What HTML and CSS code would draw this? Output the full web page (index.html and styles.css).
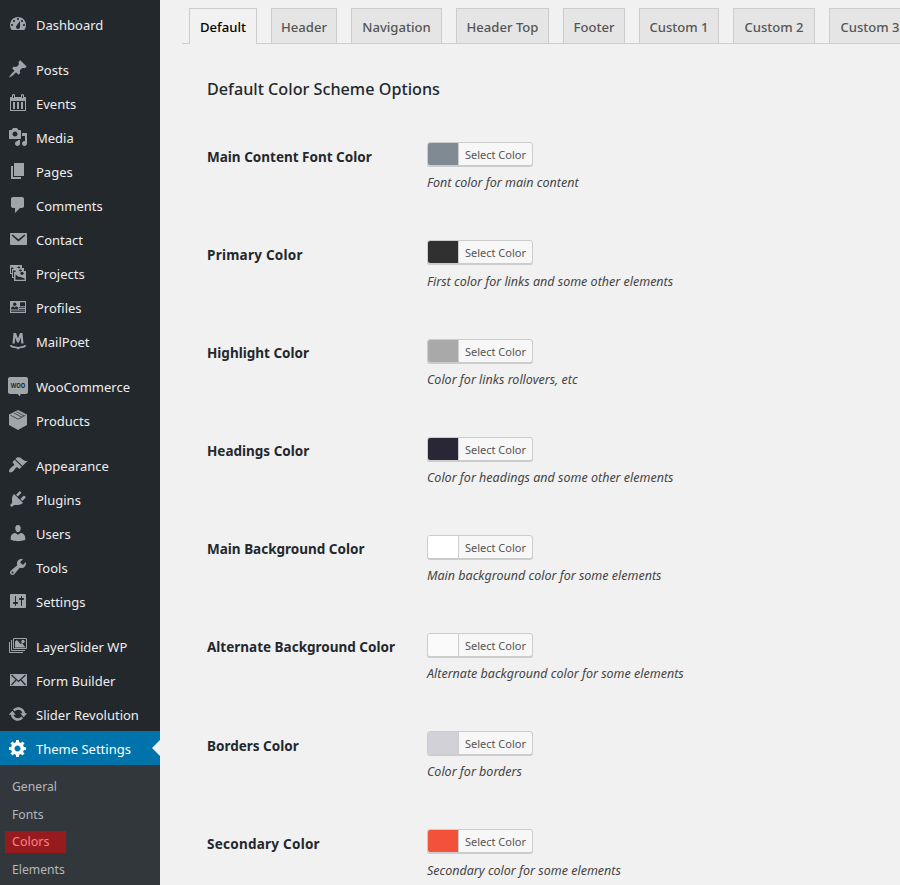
FILE: index.html
```html
<!DOCTYPE html>
<html lang="en">
<head>
<meta charset="utf-8">
<title>Theme Settings</title>
<link rel="stylesheet" href="styles.css">
</head>
<body>
<nav class="sidebar">
  <ul class="menu">
    <li class="item"><svg class="icon" viewBox="0 0 20 20"><path d="M3.76 16h12.48c1.1-1.37 1.76-3.11 1.76-5 0-4.42-3.58-8-8-8s-8 3.58-8 8c0 1.89.66 3.63 1.76 5zM10 4c.55 0 1 .45 1 1s-.45 1-1 1-1-.45-1-1 .45-1 1-1zM6 6c.55 0 1 .45 1 1s-.45 1-1 1-1-.45-1-1 .45-1 1-1zm8 0c.55 0 1 .45 1 1s-.45 1-1 1-1-.45-1-1 .45-1 1-1zm-5.37 5.55L12 7v6c0 1.1-.9 2-2 2s-2-.9-2-2c0-.57.24-1.08.63-1.45zM4 10c.55 0 1 .45 1 1s-.45 1-1 1-1-.45-1-1 .45-1 1-1zm12 0c.55 0 1 .45 1 1s-.45 1-1 1-1-.45-1-1 .45-1 1-1z"/></svg><span>Dashboard</span></li>
    <li class="item gap"><svg class="icon" viewBox="0 0 20 20"><path d="M10.44 3.02l1.82-1.82 6.36 6.35-1.83 1.82c-1.05-.68-2.48-.57-3.41.36l-.75.75c-.92.93-1.04 2.35-.35 3.41l-1.83 1.82-2.41-2.41-2.8 2.79c-.42.42-3.38 2.71-3.8 2.29s1.86-3.39 2.28-3.81l2.79-2.79L4.1 9.36l1.83-1.82c1.05.69 2.48.57 3.4-.36l.75-.75c.93-.92 1.05-2.35.36-3.41z"/></svg><span>Posts</span></li>
    <li class="item"><svg class="icon" viewBox="0 0 20 20"><path d="M2 4h2V2.500c0-2 3-2 3 0V4h6V2.500c0-2 3-2 3 0V4h2v14H2zM3 8v9h14V8zM5 9h2v7H5zM9 9h2v7H9zM13 9h2v7h-2zM5 2.500V5h1V2.500zM14 2.500V5h1V2.500z" fill-rule="evenodd"/></svg><span>Events</span></li>
    <li class="item"><svg class="icon" viewBox="0 0 20 20"><path d="M13 11V4c0-.55-.45-1-1-1h-1.67L9 1H5L3.67 3H2c-.55 0-1 .45-1 1v7c0 .55.45 1 1 1h10c.55 0 1-.45 1-1zM7 4.5c1.38 0 2.5 1.12 2.5 2.5S8.38 9.5 7 9.5 4.5 8.38 4.5 7 5.62 4.5 7 4.5zM14 6h5v10.5c0 1.38-1.12 2.5-2.5 2.5S14 17.88 14 16.5s1.12-2.5 2.5-2.5c.17 0 .34.02.5.05V9h-3V6zm-4 8.05V13h2v3.5c0 1.38-1.12 2.5-2.5 2.5S7 17.88 7 16.5 8.12 14 9.5 14c.17 0 .34.02.5.05z"/></svg><span>Media</span></li>
    <li class="item"><svg class="icon" viewBox="0 0 20 20"><path d="M6 15V2h10v13H6zm-1 1h8v2H3V5h2v11z"/></svg><span>Pages</span></li>
    <li class="item"><svg class="icon" viewBox="0 0 20 20"><path d="M5 2h9c1.1 0 2 .9 2 2v7c0 1.1-.9 2-2 2h-2l-5 5v-5H5c-1.1 0-2-.9-2-2V4c0-1.1.9-2 2-2z"/></svg><span>Comments</span></li>
    <li class="item"><svg class="icon" viewBox="0 0 20 20"><path d="M3 4h15c.6 0 1 .4 1 1v10c0 .6-.4 1-1 1H3c-.6 0-1-.4-1-1V5c0-.6.4-1 1-1zM3.6 6.6l6.9 5.9 6.9-5.9-1-1-5.9 4.6-5.9-4.6z" fill-rule="evenodd"/></svg><span>Contact</span></li>
    <li class="item"><svg class="icon" viewBox="0 0 20 20"><path d="M2 2h12v3h2v3h2v10H6v-3H4v-4H2zM3 4.500v5.500h1V6h1.200V4.500zM5 7.500V14h1V9h1.500V7.500z" fill-rule="evenodd"/><path class="hole" d="M7.500 16.700V11.500l3 2.200 2 .3 4.200 1.500v1.200zM9 4.500l2-1.200 1.500 1.500-1.500.8zM10.500 7.800l2-1.500 1.500 1-1.200 1.300z"/><circle class="hole" cx="14" cy="10.300" r="1.600"/></svg><span>Projects</span></li>
    <li class="item"><svg class="icon" viewBox="0 0 20 20"><path d="M2 4h16v12H2zM3 13.500v1.200h14v-1.200zM12 5.200v4h5v-4zM11 10.200v.9h6v-.9zM11 12v.8h6V12z" fill-rule="evenodd"/><path class="hole" d="M3.200 12.500v-2l2-1.300L6.700 10.500l1.500-1.300 2 1.300v2z"/><circle class="hole" cx="6.700" cy="7.300" r="1.700"/></svg><span>Profiles</span></li>
    <li class="item"><svg class="icon" viewBox="0 0 20 20"><path d="M4.500 12.500L5.500 2H8l2 5.500L12 2h2.500l1 10.500h-2.200L12.800 6.500 10.900 11.500H9.100L7.200 6.500l-.5 6z"/><path class="line" d="M2.600 14.300c1 3 5.400.6 7.400 3 2-2.400 6.400 0 7.400-3"/></svg><span>MailPoet</span></li>
    <li class="item gap"><svg class="icon" viewBox="0 0 20 20"><path d="M2 1h16c1.100 0 2 .9 2 2v13c0 1.100-.9 2-2 2h-5.500l-.5 2.500L9.500 18H2c-1.100 0-2-.9-2-2V3c0-1.100.9-2 2-2z"/><text class="woo" x="2.800" y="12" textLength="14.500" lengthAdjust="spacingAndGlyphs">WOO</text></svg><span>WooCommerce</span></li>
    <li class="item"><svg class="icon" viewBox="0 0 20 20"><path d="M10 0l9 4.500v10.500L10 20l-9-5V4.500z"/><path class="seam" d="M2.500 5.200L10 9.200l7.500-4M6 3l8 4.300M8.500 1.800l7.500 4"/></svg><span>Products</span></li>
    <li class="item gap"><svg class="icon" viewBox="0 0 20 20"><path d="M14.480 11.060L7.410 3.990l1.500-1.500c.5-.56 2.300-.47 3.510.32 1.210.8 1.430 1.280 2.910 2.100 1.180.64 2.450 1.260 4.450.85zm-.71.71L6.700 4.700 4.930 6.470c-.39.39-.39 1.020 0 1.410l1.060 1.060c.39.39.39 1.030 0 1.420-.6.6-1.430 1.110-2.210 1.690-.35.26-.7.53-1.010.84C1.430 14.230.4 16.080 1.400 17.070c.99 1 2.840-.03 4.180-1.360.31-.31.58-.66.85-1.020.57-.78 1.080-1.610 1.690-2.210.39-.39 1.020-.39 1.410 0l1.060 1.060c.39.39 1.020.39 1.410 0z"/></svg><span>Appearance</span></li>
    <li class="item"><svg class="icon" viewBox="0 0 20 20"><path d="M13.110 4.360L9.870 7.600 8 5.730l3.240-3.240c.35-.34 1.050-.2 1.560.32.52.51.66 1.210.31 1.550zm-8 1.770l.91-1.120 9.010 9.010-1.190.84c-.71.71-2.630 1.160-3.820 1.160H6.140L4.900 17.260c-.59.59-1.540.59-2.120 0-.59-.58-.59-1.530 0-2.120l1.240-1.240v-3.880c0-1.130.4-3.190 1.090-3.890zm7.260 3.970l3.240-3.240c.34-.35 1.040-.21 1.550.31.52.51.66 1.210.31 1.550l-3.240 3.250z"/></svg><span>Plugins</span></li>
    <li class="item"><svg class="icon" viewBox="0 0 20 20"><path d="M10 9.250c-2.270 0-2.730-3.440-2.730-3.440C7 4.020 7.820 2 9.970 2c2.160 0 2.980 2.020 2.710 3.810 0 0-.41 3.440-2.680 3.440zm0 2.570L12.720 10c2.390 0 4.520 2.330 4.520 4.530v2.490s-3.650 1.130-7.240 1.130c-3.650 0-7.240-1.130-7.240-1.130v-2.490c0-2.250 1.940-4.480 4.470-4.480z"/></svg><span>Users</span></li>
    <li class="item"><svg class="icon" viewBox="0 0 20 20"><path d="M16.680 9.770c-1.340 1.340-3.300 1.670-4.950.99l-5.410 6.520c-.99.99-2.590.99-3.580 0s-.99-2.590 0-3.570l6.520-5.420c-.68-1.650-.35-3.610.99-4.950 1.280-1.280 3.120-1.620 4.720-1.060l-2.890 2.890 2.820 2.820 2.860-2.870c.53 1.580.18 3.390-1.080 4.650zM3.810 16.210c.4.39 1.040.39 1.430 0 .4-.4.4-1.040 0-1.430-.39-.4-1.030-.4-1.430 0-.39.39-.39 1.030 0 1.430z"/></svg><span>Tools</span></li>
    <li class="item"><svg class="icon" viewBox="0 0 20 20"><path d="M18 16V4c0-.55-.45-1-1-1H3c-.55 0-1 .45-1 1v12c0 .55.45 1 1 1h14c.55 0 1-.45 1-1zM8 11h1c.55 0 1 .45 1 1s-.45 1-1 1H8v1.500c0 .28-.22.5-.5.5s-.5-.22-.5-.5V13H6c-.55 0-1-.45-1-1s.45-1 1-1h1V5.500c0-.28.22-.5.5-.5s.5.22.5.5V11zm5-2h-1c-.55 0-1-.45-1-1s.45-1 1-1h1V5.500c0-.28.22-.5.5-.5s.5.22.5.5V7h1c.55 0 1 .45 1 1s-.45 1-1 1h-1v5.500c0 .28-.22.5-.5.5s-.5-.22-.5-.5V9z"/></svg><span>Settings</span></li>
    <li class="item gap"><svg class="icon" viewBox="0 0 20 20"><path class="frame" d="M5.500 2.500h13v10h-13zM3.500 4v10.500H17M1.500 6v10.500H15"/><path d="M7 11.500V5.500l2-1.500 3.500 4 1.500-1 3.500 4.500z"/><circle cx="15" cy="5.500" r="1.700"/></svg><span>LayerSlider WP</span></li>
    <li class="item"><svg class="icon" viewBox="0 0 20 20"><path d="M2 4h17v12H2z"/><path class="cut" d="M3.500 5l7 6.500 7-6.500M3.500 15l4.500-5M17.500 15L13 10"/></svg><span>Form Builder</span></li>
    <li class="item"><svg class="icon" viewBox="0 0 20 20"><path d="M10.200 3.280c3.530 0 6.430 2.610 6.920 6h2.080l-3.500 4-3.500-4h2.320c-.45-1.970-2.210-3.450-4.320-3.450-1.450 0-2.730.71-3.540 1.780L4.950 5.660C6.230 4.200 8.110 3.280 10.200 3.280zm-.4 13.440c-3.520 0-6.430-2.610-6.920-6H.8l3.500-4c1.170 1.330 2.330 2.670 3.500 4H5.480c.45 1.970 2.210 3.450 4.320 3.450 1.450 0 2.730-.71 3.540-1.780l1.710 1.950c-1.280 1.460-3.150 2.380-5.250 2.380z"/></svg><span>Slider Revolution</span></li>
    <li class="item current"><svg class="icon" viewBox="0 0 20 20"><path d="M18 12h-2.180c-.17.7-.44 1.350-.81 1.930l1.540 1.540-2.100 2.100-1.540-1.540c-.58.36-1.230.63-1.910.79V19H8v-2.180c-.68-.16-1.330-.43-1.910-.79l-1.540 1.540-2.120-2.120 1.540-1.540c-.36-.58-.63-1.230-.79-1.910H1V9.030h2.170c.16-.7.44-1.350.8-1.940L2.430 5.550l2.100-2.100 1.540 1.540c.58-.37 1.240-.64 1.930-.81V2h3v2.180c.68.16 1.330.43 1.910.79l1.540-1.540 2.120 2.120-1.540 1.540c.36.59.64 1.240.8 1.940H18V12zm-8.500 1.500c1.660 0 3-1.340 3-3s-1.340-3-3-3-3 1.340-3 3 1.340 3 3 3z"/></svg><span>Theme Settings</span></li>
  </ul>
  <ul class="submenu">
    <li><span>General</span></li>
    <li><span>Fonts</span></li>
    <li class="selected"><span>Colors</span></li>
    <li><span>Elements</span></li>
  </ul>
</nav>
<main class="content">
  <div class="tabs">
    <a class="tab active">Default</a>
    <a class="tab">Header</a>
    <a class="tab">Navigation</a>
    <a class="tab">Header Top</a>
    <a class="tab">Footer</a>
    <a class="tab">Custom 1</a>
    <a class="tab">Custom 2</a>
    <a class="tab">Custom 3</a>
  </div>
  <h2 class="title">Default Color Scheme Options</h2>
  <div class="options">
    <div class="row"><div class="label">Main Content Font Color</div><div class="field"><div class="picker"><i class="swatch font"></i><span>Select Color</span></div><p class="hint">Font color for main content</p></div></div>
    <div class="row"><div class="label wide">Primary Color</div><div class="field"><div class="picker"><i class="swatch primary"></i><span>Select Color</span></div><p class="hint">First color for links and some other elements</p></div></div>
    <div class="row"><div class="label">Highlight Color</div><div class="field"><div class="picker"><i class="swatch highlight"></i><span>Select Color</span></div><p class="hint">Color for links rollovers, etc</p></div></div>
    <div class="row"><div class="label">Headings Color</div><div class="field"><div class="picker"><i class="swatch headings"></i><span>Select Color</span></div><p class="hint">Color for headings and some other elements</p></div></div>
    <div class="row"><div class="label">Main Background Color</div><div class="field"><div class="picker"><i class="swatch main-bg"></i><span>Select Color</span></div><p class="hint">Main background color for some elements</p></div></div>
    <div class="row"><div class="label">Alternate Background Color</div><div class="field"><div class="picker"><i class="swatch alt-bg"></i><span>Select Color</span></div><p class="hint">Alternate background color for some elements</p></div></div>
    <div class="row"><div class="label">Borders Color</div><div class="field"><div class="picker"><i class="swatch borders"></i><span>Select Color</span></div><p class="hint">Color for borders</p></div></div>
    <div class="row"><div class="label wide">Secondary Color</div><div class="field"><div class="picker"><i class="swatch secondary"></i><span>Select Color</span></div><p class="hint">Secondary color for some elements</p></div></div>
  </div>
</main>
</body>
</html>
```
FILE: styles.css
```css
* { box-sizing: border-box; }
body {
  margin: 0;
  height: 885px;
  display: flex;
  overflow: hidden;
  background: #f1f1f1;
  color: #23282d;
  font-family: "Noto Sans", "Open Sans", sans-serif;
  font-size: 13px;
}
ul { list-style: none; margin: 0; padding: 0; }
.sidebar {
  flex: none;
  width: 160px;
  height: 885px;
  padding-top: 7px;
  background: #23282d;
  display: flex;
  flex-direction: column;
}
.item {
  position: relative;
  display: flex;
  align-items: center;
  gap: 8px;
  height: 34px;
  padding-left: 8px;
  color: #eee;
  white-space: nowrap;
}
.item span { padding-top: 2px; }
.gap { margin-top: 11px; }
.icon { width: 20px; height: 20px; flex: none; fill: #a0a5aa; overflow: visible; }
.icon .hole { fill: #23282d; }
.icon .line { fill: none; stroke: #a0a5aa; stroke-width: 1.8; }
.icon .cut { fill: none; stroke: #23282d; stroke-width: 1.2; }
.icon .seam { fill: none; stroke: #23282d; stroke-width: 0.7; }
.icon .frame { fill: none; stroke: #a0a5aa; stroke-width: 1; }
.icon .woo { font: bold 7px "Noto Sans", sans-serif; fill: #23282d; }
.current { background: #0073aa; color: #fff; }
.current .icon { fill: #fff; }
.current::after {
  content: "";
  position: absolute;
  right: 0;
  top: 9px;
  border: 8px solid transparent;
  border-left-width: 0;
  border-right-color: #f1f1f1;
}
.submenu {
  flex: 1;
  background: #32373c;
  padding: 8px 0 0 5px;
  color: #b4b9be;
  font-size: 12.2px;
}
.submenu li { height: 27.8px; display: flex; align-items: center; }
.submenu span { padding: 0 7px; height: 22px; line-height: 22px; }
.submenu .selected span { width: 61px; background: #971b1e; color: #ff8085; font-size: 12.5px; }
.content { flex: 1; min-width: 0; padding: 8px 0 0 22px; overflow: hidden; }
.tabs {
  display: flex;
  gap: 14px;
  height: 36px;
  padding-left: 7px;
  border-bottom: 1px solid #ccc;
}
.tab {
  flex: none;
  height: 35px;
  border: 1px solid #ccc;
  border-bottom: 0;
  background: #e5e5e5;
  color: #555;
  font-size: 13.1px;
  font-weight: 500;
  line-height: 36px;
  text-align: center;
  white-space: nowrap;
}
.tab.active { height: 36px; background: #f1f1f1; color: #000; }
.tab:nth-child(1) { width: 68px; }
.tab:nth-child(2) { width: 66px; }
.tab:nth-child(3) { width: 91px; }
.tab:nth-child(4) { width: 93px; }
.tab:nth-child(5) { width: 62px; }
.tab:nth-child(6) { width: 80px; }
.tab:nth-child(7) { width: 82px; }
.tab:nth-child(8) { width: 82px; }
.title {
  margin: 33px 0 0 25px;
  font-size: 16.2px;
  font-weight: 500;
  line-height: 24px;
}
.options { padding: 41.2px 0 0 25px; }
.row { display: flex; height: 98.17px; }
.label { width: 220px; padding-top: 4.5px; font-size: 13.5px; font-weight: 700; line-height: 20px; white-space: nowrap; }
.label.wide { letter-spacing: 0.25px; }
.picker {
  display: flex;
  width: 106px;
  height: 24px;
  border: 1px solid #ccc;
  border-radius: 3px;
  box-shadow: 0 1px 0 #ccc;
  background: #f7f7f7;
  color: #555;
  font-size: 11px;
}
.picker span { flex: 1; text-align: center; line-height: 24px; }
.swatch { width: 31px; border-right: 1px solid #ccc; border-radius: 2px 0 0 2px; }
.hint { margin: 7.3px 0 0; font-size: 12.5px; font-style: italic; line-height: 20px; color: #444; white-space: nowrap; }
.font { background: #7f8a92; }
.primary { background: #303030; }
.highlight { background: #a9a9a9; }
.headings { background: #292735; }
.main-bg { background: #fff; }
.alt-bg { background: #fafafa; }
.borders { background: #d1d1d7; }
.secondary { background: #f35139; }
```
